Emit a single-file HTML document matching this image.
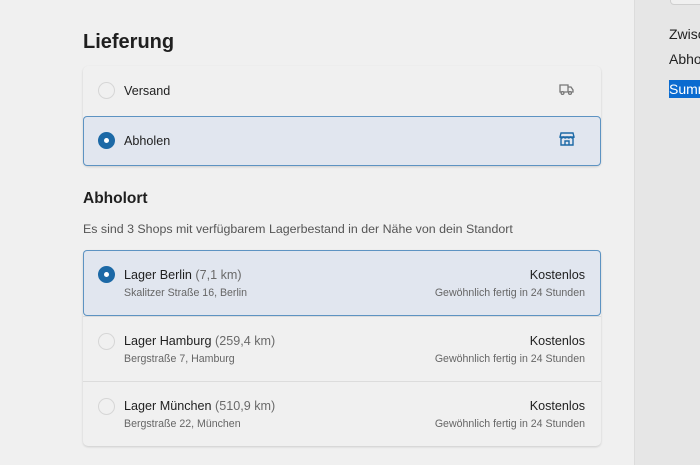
<!DOCTYPE html>
<html><head><meta charset="utf-8"><style>
*{box-sizing:border-box;margin:0;padding:0}
html,body{overflow:hidden}
body{width:700px;height:465px;background:#f0f0f0;font-family:"Liberation Sans",sans-serif;color:#1f1f1f;position:relative}
.side{position:absolute;left:634px;top:0;width:66px;height:465px;background:#e6e6e6;border-left:1px solid #dcdcdc;overflow:hidden}
.side .box{position:absolute;left:35px;top:-6px;width:60px;height:11px;border:1px solid #cfcfcf;border-radius:4px;background:#f0f0f0}
.side div.t{position:absolute;left:34px;font-size:14px;color:#222;white-space:nowrap}
h1{position:absolute;left:83px;top:31px;font-size:20px;font-weight:bold}
h2{position:absolute;left:83px;top:190px;font-size:15.5px;font-weight:bold}
.sub{position:absolute;left:83px;top:222px;font-size:12.4px;color:#555}
.card{position:absolute;left:83px;width:518px;border-radius:5px;box-shadow:0 1px 2px rgba(0,0,0,.15)}
.row{position:relative;border-top:1px solid #dcdcdc}
.row:first-child{border-top:none}
.sel{background:#e1e6ef;box-shadow:inset 0 0 0 1px #5d93c2;border-radius:4px;border-top:none}
.radio{position:absolute;left:15px;width:17px;height:17px;border-radius:50%;border:1px solid #d6d6d6;background:#f0f0f0}
.sel .radio{background:#1c69a6;border-color:#1c69a6}
.sel .radio:after{content:"";position:absolute;left:5px;top:5px;width:5px;height:5px;border-radius:50%;background:#fff}
.lbl{position:absolute;left:41px;font-size:12.6px}
.g{color:#6a6a6a}
.s{font-size:10.6px;color:#666}
.r{position:absolute;right:16px;text-align:right}
</style></head><body>
<div class="side"><div class="box"></div>
<div class="t" style="top:26px">Zwischensumme</div>
<div class="t" style="top:51px">Abholung</div>
<div class="t" style="top:80px;background:#0a6bd0;color:#fff;padding:1px 0">Summe</div></div>
<h1>Lieferung</h1>
<div class="card" style="top:66px;height:100px">
 <div class="row" style="height:50px"><div class="radio" style="top:16px"></div><div class="lbl" style="top:18px">Versand</div>
 <svg style="position:absolute;right:27px;top:17px" width="15" height="13" viewBox="0 0 15 13" fill="none" stroke="#777" stroke-width="1.3"><path d="M1 2h8v7H1z M9 4h3l2 3v2h-5"/><circle cx="3.5" cy="10" r="1.4" fill="#f0f0f0"/><circle cx="11" cy="10" r="1.4" fill="#f0f0f0"/></svg></div>
 <div class="row sel" style="height:50px"><div class="radio" style="top:16px"></div><div class="lbl" style="top:18px">Abholen</div>
 <svg style="position:absolute;right:26px;top:15px" width="16" height="16" viewBox="0 0 16 16" fill="none" stroke="#1c69a6" stroke-width="1.4"><path d="M2 2h12l1 4H1z M1 6q1.75 2 3.5 0q1.75 2 3.5 0q1.75 2 3.5 0q1.75 2 3.5 0 M2 7v7h12V7 M6 14v-4h4v4"/></svg></div>
</div>
<h2>Abholort</h2>
<div class="sub">Es sind 3 Shops mit verfügbarem Lagerbestand in der Nähe von dein Standort</div>
<div class="card" style="top:250px;height:196px">
 <div class="row sel" style="height:66px"><div class="radio" style="top:16px"></div>
  <div class="lbl" style="top:18px">Lager Berlin <span class="g">(7,1 km)</span></div>
  <div class="lbl s" style="top:37px">Skalitzer Straße 16, Berlin</div>
  <div class="r" style="top:18px;font-size:12.6px">Kostenlos</div>
  <div class="r s" style="top:37px">Gewöhnlich fertig in 24 Stunden</div></div>
 <div class="row" style="height:65px"><div class="radio" style="top:16px"></div>
  <div class="lbl" style="top:17px">Lager Hamburg <span class="g">(259,4 km)</span></div>
  <div class="lbl s" style="top:36px">Bergstraße 7, Hamburg</div>
  <div class="r" style="top:17px;font-size:12.6px">Kostenlos</div>
  <div class="r s" style="top:36px">Gewöhnlich fertig in 24 Stunden</div></div>
 <div class="row" style="height:65px"><div class="radio" style="top:16px"></div>
  <div class="lbl" style="top:17px">Lager München <span class="g">(510,9 km)</span></div>
  <div class="lbl s" style="top:36px">Bergstraße 22, München</div>
  <div class="r" style="top:17px;font-size:12.6px">Kostenlos</div>
  <div class="r s" style="top:36px">Gewöhnlich fertig in 24 Stunden</div></div>
</div>
</body></html>
